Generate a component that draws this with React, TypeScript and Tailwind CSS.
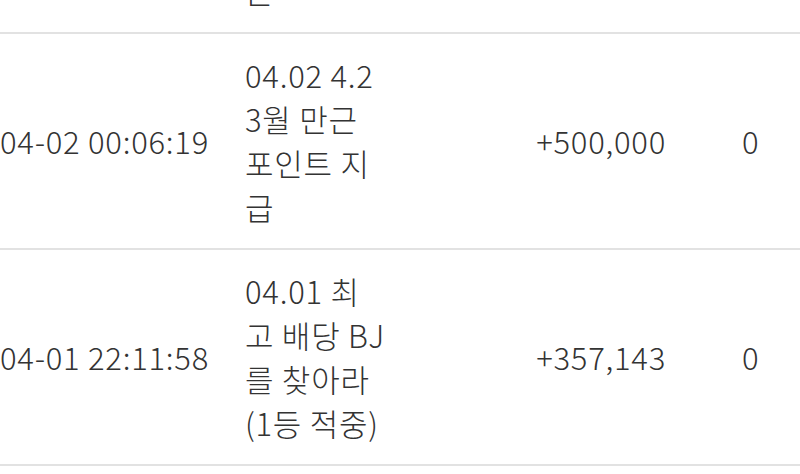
import React from "react";

const rows = [
  {
    date: "04-02 00:06:19",
    title: ["04.02 4.2", "3월 만근", "포인트 지", "급"],
    amount: "+500,000",
    rest: "0",
  },
  {
    date: "04-01 22:11:58",
    title: ["04.01 최", "고 배당 BJ", "를 찾아라", "(1등 적중)"],
    amount: "+357,143",
    rest: "0",
  },
];

export default function App() {
  return (
    <div
      className="w-[800px] h-[474px] overflow-hidden bg-white text-[#333333] text-[31px] leading-[44px] font-light tracking-[0.75px]"
      style={{ fontFamily: '"Noto Sans CJK KR", "Noto Sans", sans-serif' }}
    >
      <div className="h-[32px] overflow-hidden flex items-end pb-[19px]">
        <div className="w-[245px] shrink-0" />
        <div className="w-[140px] shrink-0">근</div>
      </div>
      {rows.map((r) => (
        <div
          key={r.date}
          className="flex items-center h-[216px] border-t-2 border-[#e2e2e2]"
        >
          <div className="w-[245px] shrink-0 whitespace-nowrap">{r.date}</div>
          <div className="w-[150px] shrink-0 flex flex-col whitespace-nowrap">
            {r.title.map((t) => (
              <span key={t}>{t}</span>
            ))}
          </div>
          <div className="w-[271px] shrink-0 text-right whitespace-nowrap">
            {r.amount}
          </div>
          <div className="flex-1 pl-[76px]">{r.rest}</div>
        </div>
      ))}
      <div className="border-t-2 border-[#e2e2e2]" />
    </div>
  );
}
